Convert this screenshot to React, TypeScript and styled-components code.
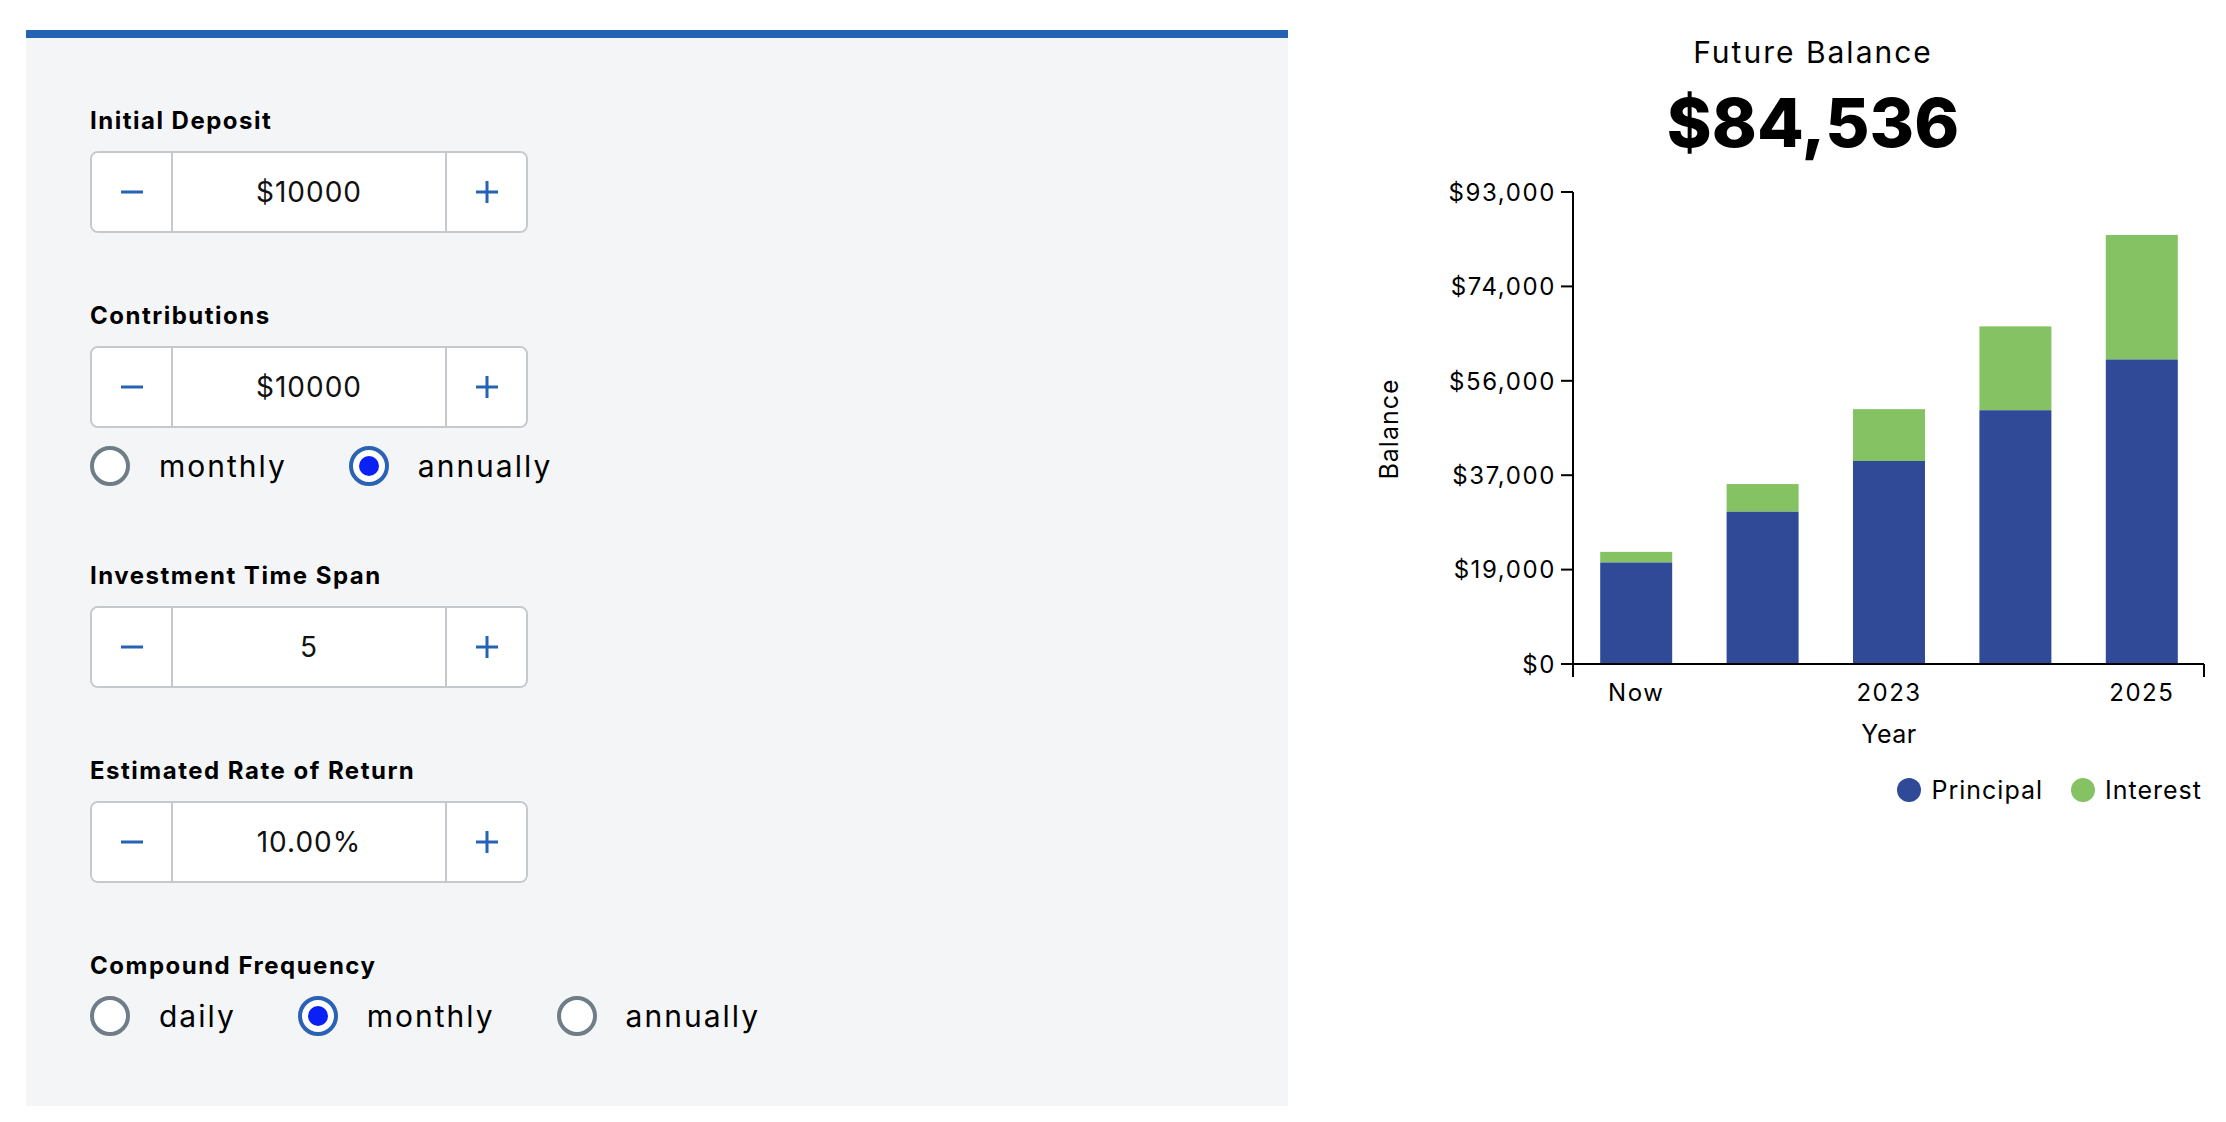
import React from "react";
import styled, { createGlobalStyle } from "styled-components";

const GlobalStyle = createGlobalStyle`
  html, body { margin: 0; padding: 0; background: #ffffff; }
  body { font-family: "Inter", "Noto Sans", sans-serif; color: #000; }
  * { box-sizing: border-box; }
`;

const Page = styled.div`
  display: flex;
  align-items: flex-start;
  width: 2226px;
  min-height: 1122px;
`;

const FormPanel = styled.section`
  width: 1262px;
  margin: 30px 0 0 26px;
  background: #f4f5f7;
  border-top: 8px solid #2463b4;
  padding: 68px 0 70px 64px;
  display: flex;
  flex-direction: column;
  gap: 68px;
`;

const Field = styled.div`
  display: flex;
  flex-direction: column;
`;

const FieldLabel = styled.div`
  font-size: 24px;
  line-height: 29px;
  font-weight: 700;
  letter-spacing: 1.5px;
  color: #000;
  margin-bottom: 16px;
`;

const Stepper = styled.div`
  display: flex;
  width: 438px;
  height: 82px;
  background: #ffffff;
  border: 2px solid #c4c9cd;
  border-radius: 8px;
  overflow: hidden;
`;

const StepButton = styled.button<{ $side: "left" | "right" }>`
  width: 81px;
  flex: none;
  display: flex;
  align-items: center;
  justify-content: center;
  background: #ffffff;
  border: none;
  padding: 0;
  margin: 0;
  cursor: pointer;
  border-right: ${(p) => (p.$side === "left" ? "2px solid #c4c9cd" : "none")};
  border-left: ${(p) => (p.$side === "right" ? "2px solid #c4c9cd" : "none")};
`;

const StepValue = styled.div`
  flex: 1;
  display: flex;
  align-items: center;
  justify-content: center;
  font-size: 28px;
  letter-spacing: 1px;
  color: #111;
`;

const RadioRow = styled.div<{ $mt: number; $mb: number }>`
  display: flex;
  align-items: center;
  gap: 62px;
  margin-top: ${(p) => p.$mt}px;
  margin-bottom: ${(p) => p.$mb}px;
`;

const RadioItem = styled.label`
  display: flex;
  align-items: center;
  gap: 29px;
  font-size: 30px;
  letter-spacing: 2px;
  color: #000;
  cursor: pointer;
`;

const RadioCircle = styled.span<{ $checked: boolean }>`
  width: 40px;
  height: 40px;
  flex: none;
  border-radius: 50%;
  background: #ffffff;
  border: 4px solid ${(p) => (p.$checked ? "#2a63b6" : "#6e7d86")};
  display: flex;
  align-items: center;
  justify-content: center;
  &::after {
    content: "";
    display: ${(p) => (p.$checked ? "block" : "none")};
    width: 20px;
    height: 20px;
    border-radius: 50%;
    background: #0b20f5;
  }
`;

const ResultColumn = styled.section`
  flex: 1;
  padding: 0 21px 0 80px;
  display: flex;
  flex-direction: column;
`;

const Heading = styled.div`
  padding-left: 53px;
  text-align: center;
`;

const Title = styled.h2`
  margin: 34px 0 0;
  font-size: 30px;
  line-height: 36px;
  font-weight: 400;
  letter-spacing: 2px;
`;

const Amount = styled.div`
  margin-top: 12px;
  font-size: 68px;
  line-height: 80px;
  font-weight: 800;
`;

const ChartSvg = styled.svg`
  display: block;
  margin-top: 8px;
  font-family: "Inter", "Noto Sans", sans-serif;
`;

const AxisText = styled.text<{ $size: number; $spacing: number }>`
  font-size: ${(p) => p.$size}px;
  letter-spacing: ${(p) => p.$spacing}px;
  fill: #000;
`;

const Legend = styled.div`
  display: flex;
  justify-content: flex-end;
  gap: 28px;
  margin-top: 15px;
  padding-right: 3px;
`;

const LegendItem = styled.div`
  display: flex;
  align-items: center;
  gap: 10px;
  font-size: 25px;
  line-height: 30px;
  letter-spacing: 1px;
`;

const Dot = styled.span<{ $color: string }>`
  width: 24px;
  height: 24px;
  border-radius: 50%;
  background: ${(p) => p.$color};
  flex: none;
`;

const BLUE = "#2563b4";

const MinusIcon = () => (
  <svg width="22" height="22" viewBox="0 0 22 22">
    <line x1="0" y1="11" x2="22" y2="11" stroke={BLUE} strokeWidth="3" />
  </svg>
);

const PlusIcon = () => (
  <svg width="22" height="22" viewBox="0 0 22 22">
    <line x1="0" y1="11" x2="22" y2="11" stroke={BLUE} strokeWidth="3" />
    <line x1="11" y1="0" x2="11" y2="22" stroke={BLUE} strokeWidth="3" />
  </svg>
);

const NumberStepper = ({ value }: { value: string }) => (
  <Stepper>
    <StepButton $side="left" aria-label="decrease">
      <MinusIcon />
    </StepButton>
    <StepValue>{value}</StepValue>
    <StepButton $side="right" aria-label="increase">
      <PlusIcon />
    </StepButton>
  </Stepper>
);

const Radio = ({ label, checked }: { label: string; checked: boolean }) => (
  <RadioItem>
    <RadioCircle $checked={checked} />
    {label}
  </RadioItem>
);

const principal = [20000, 30000, 40000, 50000, 60000];
const totals = [22094, 35455, 50215, 66520, 84536];
const xLabels = ["Now", "", "2023", "", "2025"];
const ticks = [
  { v: 0, l: "$0" },
  { v: 18600, l: "$19,000" },
  { v: 37200, l: "$37,000" },
  { v: 55800, l: "$56,000" },
  { v: 74400, l: "$74,000" },
  { v: 93000, l: "$93,000" },
];

const AXIS_X = 205;
const AXIS_RIGHT = 837;
const ZERO_Y = 494;
const TOP_Y = 22;
const MAX = 93000;
const BAND = (AXIS_RIGHT - AXIS_X) / 5;
const BAR_W = 72;
const yOf = (v: number) => ZERO_Y - (v / MAX) * (ZERO_Y - TOP_Y);

const BalanceChart = () => (
  <ChartSvg width="837" height="590" viewBox="0 0 837 590">
    {principal.map((p, i) => {
      const x = AXIS_X + i * BAND + (BAND - BAR_W) / 2;
      return (
        <g key={i}>
          <rect x={x} y={yOf(totals[i])} width={BAR_W} height={yOf(p) - yOf(totals[i])} fill="#84c263" />
          <rect x={x} y={yOf(p)} width={BAR_W} height={ZERO_Y - yOf(p)} fill="#304a98" />
        </g>
      );
    })}
    <line x1={AXIS_X} y1={TOP_Y} x2={AXIS_X} y2={507} stroke="#000" strokeWidth="2" />
    <line x1={AXIS_X} y1={ZERO_Y} x2={AXIS_RIGHT - 1} y2={ZERO_Y} stroke="#000" strokeWidth="2" />
    <line x1={AXIS_RIGHT - 1} y1={ZERO_Y} x2={AXIS_RIGHT - 1} y2={507} stroke="#000" strokeWidth="2" />
    {ticks.map((t) => (
      <g key={t.v}>
        <line x1={193} y1={yOf(t.v)} x2={AXIS_X} y2={yOf(t.v)} stroke="#000" strokeWidth="2" />
        <AxisText $size={24} $spacing={1.6} x={188} y={yOf(t.v) + 8.7} textAnchor="end">
          {t.l}
        </AxisText>
      </g>
    ))}
    {xLabels.map((l, i) =>
      l ? (
        <AxisText key={i} $size={24} $spacing={1.5} x={AXIS_X + i * BAND + BAND / 2} y={531} textAnchor="middle">
          {l}
        </AxisText>
      ) : null
    )}
    <AxisText $size={25} $spacing={0.5} x={AXIS_X + (AXIS_RIGHT - AXIS_X) / 2} y={573} textAnchor="middle">
      Year
    </AxisText>
    <AxisText $size={25} $spacing={1} textAnchor="middle" transform="translate(30,259) rotate(-90)">
      Balance
    </AxisText>
  </ChartSvg>
);

export default function App() {
  return (
    <>
      <GlobalStyle />
      <Page>
        <FormPanel>
          <Field>
            <FieldLabel>Initial Deposit</FieldLabel>
            <NumberStepper value="$10000" />
          </Field>
          <Field>
            <FieldLabel>Contributions</FieldLabel>
            <NumberStepper value="$10000" />
            <RadioRow $mt={18} $mb={7}>
              <Radio label="monthly" checked={false} />
              <Radio label="annually" checked={true} />
            </RadioRow>
          </Field>
          <Field>
            <FieldLabel>Investment Time Span</FieldLabel>
            <NumberStepper value="5" />
          </Field>
          <Field>
            <FieldLabel>Estimated Rate of Return</FieldLabel>
            <NumberStepper value="10.00%" />
          </Field>
          <Field>
            <FieldLabel>Compound Frequency</FieldLabel>
            <RadioRow $mt={0} $mb={0}>
              <Radio label="daily" checked={false} />
              <Radio label="monthly" checked={true} />
              <Radio label="annually" checked={false} />
            </RadioRow>
          </Field>
        </FormPanel>
        <ResultColumn>
          <Heading>
            <Title>Future Balance</Title>
            <Amount>$84,536</Amount>
          </Heading>
          <BalanceChart />
          <Legend>
            <LegendItem>
              <Dot $color="#304a98" />
              Principal
            </LegendItem>
            <LegendItem>
              <Dot $color="#84c263" />
              Interest
            </LegendItem>
          </Legend>
        </ResultColumn>
      </Page>
    </>
  );
}
